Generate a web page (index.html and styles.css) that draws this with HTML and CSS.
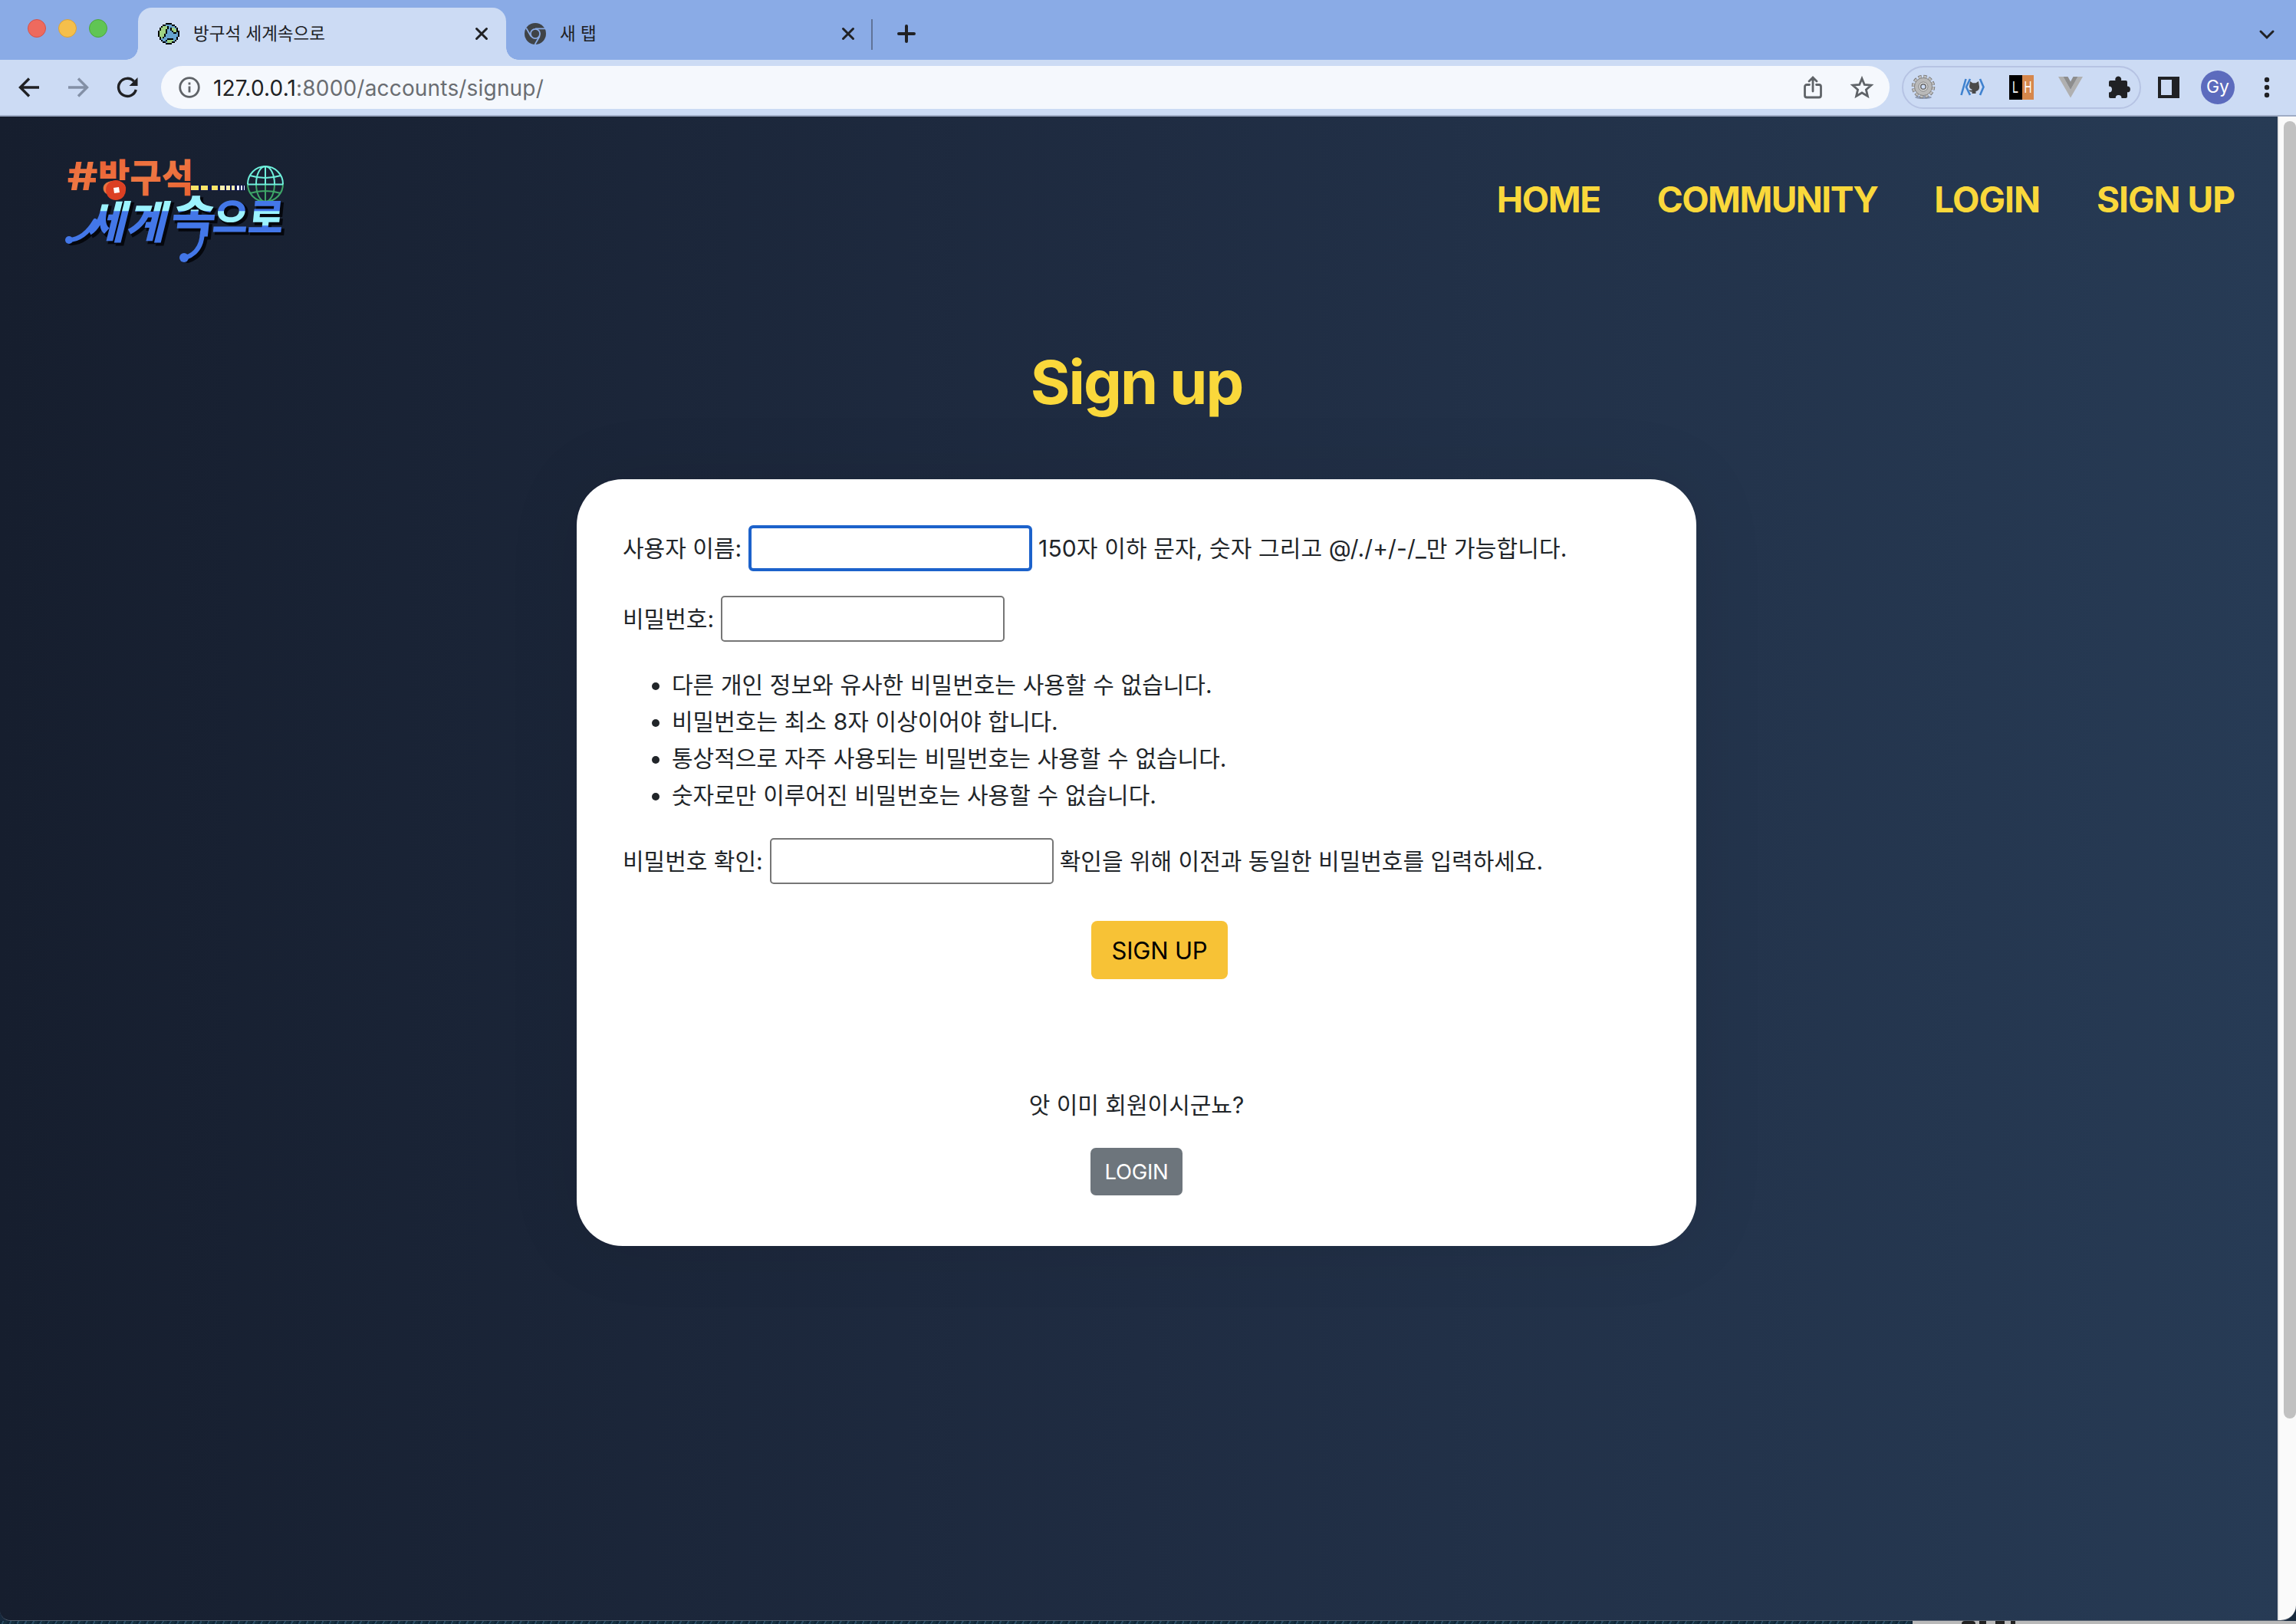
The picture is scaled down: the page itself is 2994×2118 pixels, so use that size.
FILE: index.html
```html
<!DOCTYPE html>
<html lang="ko">
<head>
<meta charset="utf-8">
<title>방구석 세계속으로</title>
<link rel="stylesheet" href="styles.css">
</head>
<body>
<div class="window">
  <div class="tabstrip">
    <div class="lights"><i class="red"></i><i class="yellow"></i><i class="green"></i></div>
    <div class="tab active">
      <svg class="fav" viewBox="0 0 14 14" shape-rendering="crispEdges">
        <path fill="#000" d="M5 0h4v1h2v1h1v1h1v2h1v4h-1v2h-1v1h-1v1H9v1H5v-1H3v-1H2v-1H1V9H0V5h1V3h1V2h1V1h2z"/>
        <path fill="#66a3cf" d="M5 1h4v1h2v1h1v2h1v4h-1v2h-1v1H9v1H5v-1H3v-1H2V9H1V5h1V3h1V2h2z"/>
        <path fill="#9fd283" d="M3 2h3v2H5v3H4v2H3v1H2V9H1V5h1V3h1zM9 3h2v1h1v2h-2V5H9zM6 11h4v1H9v1H6z"/>
        <path fill="#000" d="M6 2h1v2H6zM5 4h1v3H5zM4 7h1v2H4zM3 9h1v1H3zM8 3h1v2H8zM9 5h1v1H9zM10 6h2v1h-2zM12 5h1v1h-1zM6 10h4v1H6zM5 11h1v1H5z"/>
      </svg>
      <span class="tab-title">방구석 세계속으로</span>
      <svg class="x" viewBox="0 0 16 16"><path d="M1.5 1.5l13 13M14.5 1.5l-13 13"/></svg>
    </div>
    <div class="tab second">
      <svg class="fav" viewBox="0 0 28 28">
        <circle cx="14" cy="14" r="14" fill="#3f4347"/>
        <circle cx="14" cy="14" r="7" fill="#8aabe6"/>
        <path d="M14 7.4h13M8.3 17.3L2.2 6.600M19.700 17.300L13.500 28" stroke="#8aabe6" stroke-width="1.8"/>
        <circle cx="14" cy="14" r="5.200" fill="#3f4347"/>
      </svg>
      <span class="tab-title">새 탭</span>
      <svg class="x" viewBox="0 0 16 16"><path d="M1.5 1.5l13 13M14.5 1.5l-13 13"/></svg>
    </div>
    <span class="tab-sep"></span>
    <svg class="plus" viewBox="0 0 24 24"><path d="M12 2v20M2 12h20"/></svg>
    <svg class="chev" viewBox="0 0 20 12"><path d="M2 2l8 8 8-8"/></svg>
  </div>

  <div class="toolbar">
    <svg class="nav-ico" viewBox="0 0 28 28"><path d="M27 14H3M14 2.500L2.500 14 14 25.500"/></svg>
    <svg class="nav-ico dim" viewBox="0 0 28 28"><path d="M1 14h24M14 2.500L25.500 14 14 25.500"/></svg>
    <svg class="nav-ico" viewBox="0 0 28 28"><path d="M25.300 17A11.600 11.600 0 1 1 22.600 6"/><path class="solid" d="M27.500 1v11h-11z"/></svg>
    <div class="omnibox">
      <svg class="info" viewBox="0 0 28 28"><circle cx="14" cy="14" r="12.300"/><path d="M14 12.500v8M14 7.500v3"/></svg>
      <span class="url">127.0.0.1<em>:8000/accounts/signup/</em></span>
      <svg class="share" viewBox="0 0 24 30"><path d="M7.500 11.500H4a2.500 2.500 0 0 0-2.500 2.500v11.500A2.500 2.500 0 0 0 4 28h16a2.500 2.500 0 0 0 2.500-2.500V14a2.500 2.500 0 0 0-2.500-2.500h-3.500M12 20V3M7 7l5-5 5 5"/></svg>
      <svg class="star" viewBox="0 0 30 30"><path d="M15 3.500l3.300 8 8.700.7-6.600 5.700 2 8.500L15 22l-7.400 4.400 2-8.500L3 12.200l8.700-.7z"/></svg>
    </div>
    <div class="extensions">
      <svg viewBox="0 0 32 32">
        <ellipse cx="16" cy="29" rx="11" ry="2" fill="#8f9cb5"/>
        <circle cx="16" cy="15" r="13" fill="none" stroke="#6b6b6b" stroke-width="4.500" stroke-dasharray="4.200 2.600"/>
        <circle cx="16" cy="15" r="13" fill="none" stroke="#bdbdbd" stroke-width="3" stroke-dasharray="3.600 3.200" stroke-dashoffset="-.3"/>
        <circle cx="16" cy="15" r="11.500" fill="#b9b9b9" stroke="#858585"/>
        <circle cx="16" cy="15" r="6" fill="#dedede" stroke="#858585"/>
        <circle cx="16" cy="15" r="3.300" fill="#ccdbf4" stroke="#666" stroke-width="1.500"/>
      </svg>
      <svg viewBox="0 0 32 32">
        <path d="M7.500 5L1.500 26M13 5L8 15.500 13 26M26 5l4.500 10.500L26 26" fill="none" stroke="#3f82cf" stroke-width="2.600"/>
        <path fill="#4a4a4a" d="M13 8l3.500 2.200h4L24 8l.7 5c1.300 5-1 7.500-4.200 8v3h-5v-2.500c-2 .5-3-.3-4-2l4 .3v-1c-3-1-4-3-3.200-6z"/>
      </svg>
      <svg viewBox="0 0 32 32"><path d="M0 0h17v32H0z"/><path fill="#d6874c" d="M17 0h15v32H17z"/><text class="lh" x="4" y="23" textLength="8" lengthAdjust="spacingAndGlyphs">L</text><text class="lh" x="19.500" y="23" textLength="10" lengthAdjust="spacingAndGlyphs">H</text></svg>
      <svg viewBox="0 0 32 32"><path fill="#b0b0b0" d="M0 2h6.500L16 19l9.500-17H32L16 29.500z"/><path fill="#8d8d8d" d="M6.500 2h6L16 8.500 19.500 2h6L16 19z"/></svg>
      <svg viewBox="0 0 32 32"><path fill="#202124" d="M4 7h6.500a4 4 0 1 1 7.500 0H24a2 2 0 0 1 2 2v5.500a3.900 3.900 0 0 1 0 7.800V28a2 2 0 0 1-2 2h-5.500a3.900 3.900 0 0 0-7.800 0H4a2 2 0 0 1-2-2v-5.500a4 4 0 0 0 0-8V9a2 2 0 0 1 2-2z"/></svg>
    </div>
    <svg class="panel" viewBox="0 0 28 28"><path fill="#202124" fill-rule="evenodd" d="M0 0h28v28H0zM4 4v20h14V4z"/></svg>
    <span class="avatar">Gy</span>
    <svg class="dots" viewBox="0 0 8 28"><circle cx="4" cy="4" r="3.200"/><circle cx="4" cy="14" r="3.200"/><circle cx="4" cy="24" r="3.200"/></svg>
  </div>

  <div class="viewport">
    <div class="page">
      <header>
        <svg class="logo" viewBox="60 180 340 180">
          <defs>
            <linearGradient id="sky" gradientUnits="userSpaceOnUse" x1="0" y1="250" x2="0" y2="320"><stop offset=".35" stop-color="#9cf3ff"/><stop offset=".37" stop-color="#4377e8"/></linearGradient>
            <linearGradient id="sky2" gradientUnits="userSpaceOnUse" x1="0" y1="250" x2="0" y2="320"><stop offset=".35" stop-color="#4377e8"/><stop offset=".37" stop-color="#9cf3ff"/><stop offset=".62" stop-color="#9cf3ff"/><stop offset=".64" stop-color="#4377e8"/></linearGradient>
            <linearGradient id="fire" x1="0" y1="0" x2="1" y2="1"><stop offset="0" stop-color="#ea5a30"/><stop offset=".5" stop-color="#ee7743"/><stop offset="1" stop-color="#e8602f"/></linearGradient>
            <linearGradient id="globe" gradientUnits="userSpaceOnUse" x1="0" y1="217" x2="0" y2="263"><stop offset=".5" stop-color="#6ff0dc"/><stop offset=".52" stop-color="#3ea668"/></linearGradient>
          </defs>
          <g fill="url(#fire)">
            <text class="logo-top" x="86" y="248" textLength="43" lengthAdjust="spacingAndGlyphs">#</text>
            <text class="logo-top" x="128" y="250" textLength="124" lengthAdjust="spacingAndGlyphs">방구석</text>
          </g>
          <circle cx="151" cy="248" r="13" fill="#dc4023"/><path fill="#fff" d="M148 245l7-1 1 7-7 1z"/>
          <path d="M249 245h71" stroke="#0c1550" stroke-width="7"/>
          <path fill="#fbe467" d="M249 242h10v6h-10zM262 242h9v6h-9zM276 242h8v6h-8z"/>
          <path fill="#fbf0ae" d="M287 242h6v6h-6zM295 242h5v6h-5zM302 242h4v6h-4z"/>
          <path fill="#fff" d="M309 242h3v6h-3zM314 242h2v6h-2zM318 242h1v6h-1z"/>
          <g fill="none" stroke="url(#globe)" stroke-width="2"><circle cx="346" cy="240" r="23"/><ellipse cx="346" cy="240" rx="12" ry="23"/><path d="M346.010 217l-.020 46M326 229q20 6 40 0M326 252q20-6 40 0"/><path stroke="#6ff0dc" d="M323 240.500h46"/></g>
          <g fill="none" stroke="#05070d" stroke-linecap="round" stroke-width="8" transform="translate(3 3)"><path d="M124 288q-14 24-34 25"/><path d="M264 303q-1 26-22 33"/></g>
          <g class="shade" transform="translate(3 3)">
            <text class="logo-a" transform="translate(111 311) skewX(-14)" textLength="104" lengthAdjust="spacingAndGlyphs">세계</text>
            <text class="logo-b" transform="translate(222 303) skewX(-6)" textLength="58" lengthAdjust="spacingAndGlyphs">속</text>
            <text class="logo-c" transform="translate(276 303) skewX(-6)" textLength="92" lengthAdjust="spacingAndGlyphs">으로</text>
          </g>
          <g fill="none" stroke="#4377e8" stroke-linecap="round" stroke-width="6"><path d="M124 288q-14 24-34 25"/><path d="M264 303q-1 26-22 33"/></g>
          <g fill="#4377e8"><circle cx="90" cy="313" r="5"/><circle cx="240" cy="336" r="6"/></g>
          <text class="logo-a" transform="translate(111 311) skewX(-14)" textLength="104" lengthAdjust="spacingAndGlyphs" fill="url(#skya)">세계</text>
          <text class="logo-b" transform="translate(222 303) skewX(-6)" textLength="58" lengthAdjust="spacingAndGlyphs" fill="url(#skyb)">속</text>
          <text class="logo-c" transform="translate(276 303) skewX(-6)" textLength="92" lengthAdjust="spacingAndGlyphs" fill="url(#skyc)">으로</text>
          <defs>
            <linearGradient id="skya" href="#sky" gradientTransform="translate(0 -311)"/>
            <linearGradient id="skyb" href="#sky" gradientTransform="translate(0 -303)"/>
            <linearGradient id="skyc" href="#sky2" gradientTransform="translate(0 -303)"/>
          </defs>
        </svg>
        <nav><a class="n1">HOME</a><a class="n2">COMMUNITY</a><a class="n3">LOGIN</a><a class="n4">SIGN UP</a></nav>
      </header>
      <h1>Sign up</h1>
      <main class="card">
        <form>
          <div class="row"><label>사용자 이름:</label><input class="focused" type="text"><span class="rule">150자 이하 문자, 숫자 그리고 @/./+/-/_만 가능합니다.</span></div>
          <div class="row"><label>비밀번호:</label><input type="password"></div>
          <ul>
            <li>다른 개인 정보와 유사한 비밀번호는 사용할 수 없습니다.</li>
            <li>비밀번호는 최소 8자 이상이어야 합니다.</li>
            <li>통상적으로 자주 사용되는 비밀번호는 사용할 수 없습니다.</li>
            <li>숫자로만 이루어진 비밀번호는 사용할 수 없습니다.</li>
          </ul>
          <div class="row"><label>비밀번호 확인:</label><input type="password"><span>확인을 위해 이전과 동일한 비밀번호를 입력하세요.</span></div>
          <button class="signup" type="button">SIGN UP</button>
        </form>
        <p class="question">앗 이미 회원이시군뇨?</p>
        <a class="login">LOGIN</a>
      </main>
    </div>
    <div class="scrollbar"><div class="thumb"></div></div>
  </div>
</div>
<div class="desktop"><div class="denim"></div><div class="behind"><i class="b1"></i><i class="b2"></i><i class="b3"></i><i class="b4"></i></div></div>
</body>
</html>
```
FILE: styles.css
```css
* { box-sizing: border-box; }
body { margin: 0; width: 2994px; height: 2118px; overflow: hidden; display: flex; flex-direction: column; font-family: Inter, "Noto Sans CJK KR", sans-serif; color: #212529; background: #17293d; }
svg { display: block; flex: none; overflow: visible; }
.window { height: 2114px; display: flex; flex-direction: column; border-bottom: 1px solid #56606f; border-radius: 0 0 20px 14px; overflow: hidden; flex: none; }

.tabstrip { height: 78px; flex: none; background: #8aabe6; display: flex; align-items: flex-start; }
.lights { display: flex; gap: 16px; padding: 25px 0 0 36px; width: 180px; }
.lights i { width: 24px; height: 24px; border-radius: 50%; border-width: 1px; border-style: solid; }
.red { background: #ee6a5e; border-color: #d5524a; }
.yellow { background: #f5bf4b; border-color: #d8a13a; }
.green { background: #60c554; border-color: #4ca73c; }
.tab { display: flex; align-items: center; height: 68px; margin-top: 10px; width: 480px; padding: 0 24px 0 26px; position: relative; }
.tab.active { background: #ccdbf4; border-radius: 18px 18px 0 0; }
.tab.active::before, .tab.active::after { content: ""; position: absolute; bottom: 0; width: 16px; height: 16px; }
.tab.active::before { left: -16px; background: radial-gradient(circle at 0 0, transparent 15.500px, #ccdbf4 16px); }
.tab.active::after { right: -16px; background: radial-gradient(circle at 100% 0, transparent 15.500px, #ccdbf4 16px); }
.tab.second { width: 476px; padding: 0 22px 0 24px; }
.fav { width: 28px; height: 28px; }
.tab-title { flex: 1; margin-left: 18px; font-size: 22.500px; line-height: 30px; color: #202124; }
.x { width: 16px; height: 16px; }
.x path, .plus path, .chev path { fill: none; stroke: #202124; stroke-width: 3; stroke-linecap: round; }
.tab-sep { width: 2px; height: 40px; margin: 25px 32px 0 0; background: #5f7398; }
.plus { width: 24px; height: 24px; margin-top: 32px; }
.plus path { stroke-width: 4; }
.chev { width: 20px; height: 12px; margin: 39px 28px 0 auto; }

.toolbar { height: 74px; flex: none; background: #ccdbf4; border-bottom: 2px solid #9facc6; display: flex; align-items: center; padding: 0 34px 0 24px; }
.nav-ico { width: 28px; height: 28px; margin-right: 36px; }
.nav-ico path { fill: none; stroke: #202124; stroke-width: 3.400; }
.nav-ico path.solid { fill: #202124; stroke: none; }
.nav-ico.dim path { stroke: #8390a6; }
.omnibox { width: 2254px; height: 56px; border-radius: 28px; background: #f5f8fd; display: flex; align-items: center; padding: 0 21px 0 23px; margin-left: -6px; }
.info { width: 28px; height: 28px; }
.info circle, .info path, .share path, .star path { fill: none; stroke: #5f6368; stroke-width: 2.800; }
.url { flex: 1; margin-left: 17px; padding-top: 1px; font-size: 28px; letter-spacing: .180px; color: #202124; line-height: 34px; }
.url em { font-style: normal; color: #6a6d72; }
.share { width: 24px; height: 30px; margin-right: 37px; }
.share path { stroke-linecap: round; }
.star { width: 30px; height: 30px; }
.extensions { width: 312px; height: 56px; margin-left: 16px; border: 2px solid #b6c3e3; border-radius: 28px; display: flex; align-items: center; justify-content: space-between; padding: 0 10px 0 10px; }
.extensions svg { width: 32px; height: 32px; }
.lh { font: 20px Inter, sans-serif; fill: #fff; }
.panel { width: 28px; height: 28px; margin-left: 22px; }
.avatar { width: 44px; height: 44px; margin-left: 28px; border-radius: 50%; background: #5c6bbd; color: #fff; font-size: 23px; line-height: 42px; text-align: center; flex: none; }
.dots { width: 8px; height: 28px; margin-left: 38px; fill: #202124; }

.viewport { flex: 1; display: flex; min-height: 0; }
.page { width: 2970px; background: linear-gradient(90deg, #161e2e, #1f2c42 50%, #273b55); }
.scrollbar { width: 24px; background: #fafafa; border-left: 2px solid #e6e6e6; padding: 6px 0 0 6px; }
.thumb { width: 16px; height: 1692px; border-radius: 8px; background: #c1c1c1; }
header { display: flex; justify-content: space-between; align-items: flex-start; height: 298px; padding: 28px 56px 0 60px; }
.logo { width: 340px; height: 180px; }
.logo-top { font: 900 50px "Noto Sans CJK KR", sans-serif; }
.logo-a, .logo-b, .logo-c { font: 900 58px "Noto Sans CJK KR", sans-serif; }
.logo-c { font-size: 52px; }
.shade { fill: #05070d; stroke: #05070d; stroke-width: 2; }
nav { display: flex; gap: 74px; margin-top: 56px; font-weight: 700; font-size: 46px; line-height: 48px; color: #fad83b; }
nav a { letter-spacing: -1px; white-space: nowrap; }
.n1 { letter-spacing: -1.400px; }
nav .n2 { letter-spacing: -1.550px; }
h1 { margin: 0 6px 0 0; height: 96px; font-size: 79px; line-height: 96px; font-weight: 700; letter-spacing: -1.900px; text-align: center; color: #fad83b; }
.card { width: 1460px; height: 1000px; margin: 79px 0 0 752px; background: #fff; border-radius: 60px; padding-top: 60px; display: flex; flex-direction: column; align-items: center; box-shadow: 0 0 100px rgba(0,0,0,.08); }
form { width: 100%; padding-left: 60px; display: flex; flex-direction: column; gap: 32px; font-size: 30px; line-height: 48px; }
.row { display: flex; align-items: center; height: 60px; white-space: nowrap; }
.rule { letter-spacing: .130px; }
input { width: 370px; height: 60px; margin: 0 8px 0 9px; border: 2px solid #767676; border-radius: 5px; background: #fff; padding: 0; flex: none; outline: none; }
input.focused { border: 4px solid #1c62cb; border-radius: 6px; }
ul { margin: 0; padding-left: 64px; word-spacing: .300px; }
li { height: 48px; }
button { font-family: inherit; border: 0; }
.signup { width: 178px; height: 76px; margin-top: 16px; align-self: center; border-radius: 8px; background: #f7c236; color: #000; font-size: 31px; letter-spacing: -.200px; padding: 0; }
.question { margin: 140px 0 32px; font-size: 30px; line-height: 48px; }
.login { width: 120px; height: 62px; border-radius: 7px; background: #6d757c; color: #fff; font-size: 27.500px; line-height: 62px; text-align: center; letter-spacing: -.300px; }

.desktop { height: 4px; display: flex; }
.denim { width: 2494px; background: repeating-linear-gradient(115deg, #0f2638 0 3px, #2a4c63 3px 5px, #16303f 5px 9px); }
.behind { flex: 1; background: #b9b9b9; display: flex; padding-left: 64px; }
.behind i { height: 4px; background: #222; }
.b1 { width: 18px; border-radius: 9px 9px 0 0; }
.b2 { width: 9px; margin-left: 5px; }
.b3 { width: 12px; margin-left: 12px; }
.b4 { width: 6px; margin-left: 8px; }
```
